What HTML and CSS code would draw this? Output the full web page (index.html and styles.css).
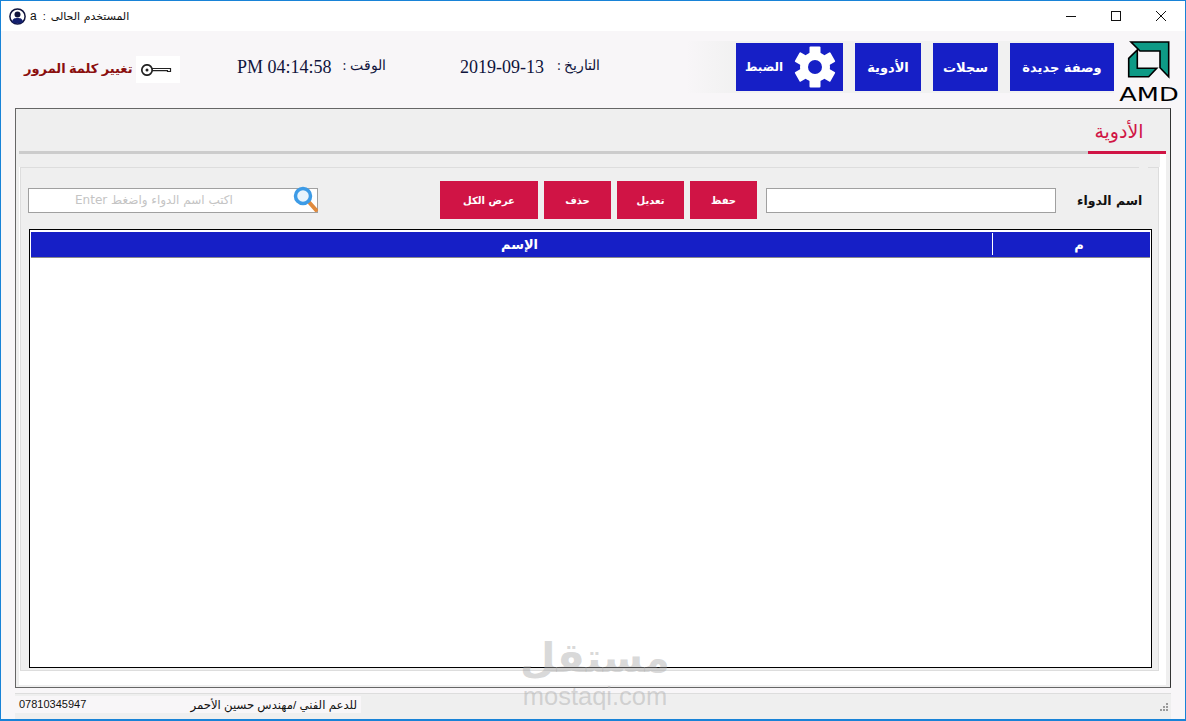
FILE: index.html
```html
<!DOCTYPE html>
<html lang="ar">
<head>
    <meta charset="UTF-8">
    <meta name="viewport" content="width=device-width, initial-scale=1.0">
    <title>AMD</title>
    <link rel="stylesheet" href="styles.css">
</head>
<body>
    <!-- Title bar -->
    <div class="titlebar">
        <svg class="user-icon" width="17" height="17" viewBox="0 0 17 17">
            <circle cx="8.5" cy="8.5" r="7.6" fill="#fff" stroke="#10143c" stroke-width="1.5"/>
            <circle cx="8.5" cy="6.4" r="3" fill="#10143c"/>
            <path d="M3 14 C3.5 10.5 5.5 10 8.5 10 C11.5 10 13.5 10.5 14 14 C12.500 16 4.500 16 3 14Z" fill="#14206e"/>
        </svg>
        <span class="title-user">a</span>
        <span class="title-sep">:</span>
        <span class="title-text">المستخدم الحالى</span>
        <div class="win-controls">
            <svg width="12" height="12" viewBox="0 0 12 12"><path d="M1 6.500H11" stroke="#111" fill="none"/></svg>
            <svg width="12" height="12" viewBox="0 0 12 12"><rect x="1.500" y="1.500" width="9" height="9" stroke="#111" fill="none"/></svg>
            <svg width="12" height="12" viewBox="0 0 12 12"><path d="M1 1L11 11M11 1L1 11" stroke="#111" fill="none"/></svg>
        </div>
    </div>

    <!-- Header -->
    <div class="header">
        <div class="password">
            <span class="password-text">تغيير كلمة المرور</span>
            <span class="key-box">
                <svg width="32" height="12" viewBox="0 0 32 12">
                    <circle cx="7" cy="6" r="5.200" fill="none" stroke="#222" stroke-width="1.700"/>
                    <circle cx="7" cy="6" r="1.500" fill="#222"/>
                    <path d="M12 4.500H30.500V7.500H27.500V6.700H12" fill="none" stroke="#222" stroke-width="1.200"/>
                </svg>
            </span>
        </div>
        <div class="clock clock-time"><span>PM 04:14:58</span><span class="clock-label" dir="rtl">الوقت :</span></div>
        <div class="clock clock-date"><span>2019-09-13</span><span class="clock-label" dir="rtl">التاريخ :</span></div>
        <div class="nav">
            <button class="nav-btn nav-settings">
                <span>الضبط</span>
                <svg width="42" height="42" viewBox="-21 -21 42 42">
                    <g fill="#fff">
                        <circle r="15"/>
                        <rect x="-5.500" y="-20.500" width="11" height="10" rx="1"/>
                        <rect x="-5.500" y="-20.500" width="11" height="10" rx="1" transform="rotate(60)"/>
                        <rect x="-5.500" y="-20.500" width="11" height="10" rx="1" transform="rotate(120)"/>
                        <rect x="-5.500" y="-20.500" width="11" height="10" rx="1" transform="rotate(180)"/>
                        <rect x="-5.500" y="-20.500" width="11" height="10" rx="1" transform="rotate(240)"/>
                        <rect x="-5.500" y="-20.500" width="11" height="10" rx="1" transform="rotate(300)"/>
                    </g>
                    <circle r="7" fill="#161fc6"/>
                </svg>
            </button>
            <button class="nav-btn nav-drugs">الأدوية</button>
            <button class="nav-btn nav-logs">سجلات</button>
            <button class="nav-btn nav-new">وصفة جديدة</button>
        </div>
        <div class="logo">
            <svg width="62" height="46" viewBox="0 0 62 46">
                <path d="M13 2H50.700V36.700L42 27.700V11H22Z" fill="#0e9a86" stroke="#000" stroke-width="1.600"/>
                <path d="M10.700 18.300L19.300 10V28.300H38.700L30.700 36.700H10.700Z" fill="#0e9a86" stroke="#000" stroke-width="1.600"/>
            </svg>
            <span class="logo-text">AMD</span>
        </div>
    </div>

    <!-- Main panel -->
    <div class="panel">
        <div class="tabs">
            <div class="tab">الأدوية</div>
        </div>
        <div class="tab-page">
            <div class="group">
                <div class="toolbar">
                    <div class="search">
                        <span class="search-hint" dir="rtl">اكتب اسم الدواء واضغط Enter</span>
                        <svg class="search-icon" width="26" height="26" viewBox="0 0 26 26">
                            <path d="M15 15L23 24" stroke="#e08a3c" stroke-width="4" stroke-linecap="round"/>
                            <circle cx="10" cy="10" r="7.500" fill="#e8f4fc" stroke="#3d9be6" stroke-width="3.500"/>
                        </svg>
                    </div>
                    <div class="actions">
                        <button class="action-btn">عرض الكل</button>
                        <button class="action-btn action-small">حذف</button>
                        <button class="action-btn action-small">تعديل</button>
                        <button class="action-btn action-small">حفظ</button>
                    </div>
                    <input class="name-input" type="text">
                    <label class="name-label">اسم الدواء</label>
                </div>
                <div class="grid">
                    <div class="grid-head">
                        <div class="col-name">الإسم</div>
                        <div class="col-num">م</div>
                    </div>
                </div>
            </div>
        </div>
    </div>

    <!-- Status bar -->
    <div class="statusbar">
        <div class="status-info">
            <span>07810345947</span>
            <span class="status-support">للدعم الفني /مهندس حسين الأحمر</span>
        </div>
        <svg class="grip" width="10" height="10" viewBox="0 0 10 10" fill="#9a9a9a">
            <rect x="7" y="1" width="2" height="2"/>
            <rect x="4" y="4" width="2" height="2"/><rect x="7" y="4" width="2" height="2"/>
            <rect x="1" y="7" width="2" height="2"/><rect x="4" y="7" width="2" height="2"/><rect x="7" y="7" width="2" height="2"/>
        </svg>
    </div>

    <!-- Watermark -->
    <div class="watermark">
        <div class="watermark-ar">مستقل</div>
        <div class="watermark-en">mostaqi.com</div>
    </div>
</body>
</html>
```

FILE: styles.css
```css
* {
    box-sizing: border-box;
}
html, body {
    margin: 0;
    padding: 0;
}
body {
    position: relative;
    width: 1186px;
    height: 721px;
    overflow: hidden;
    background: #f8f6f8;
    border: 1px solid #1883d7;
    border-bottom-width: 2px;
    font-family: "DejaVu Sans", sans-serif;
    color: #111;
}
button {
    border: none;
    padding: 0;
    font-family: inherit;
    color: white;
}

/* Title bar */
.titlebar {
    display: flex;
    align-items: center;
    height: 30px;
    padding-left: 8px;
    background: white;
    font-size: 11px;
}
.title-user {
    margin-left: 4px;
    font-family: "Liberation Sans", sans-serif;
    font-size: 12px;
}
.title-sep {
    margin-left: 6px;
    font-family: "Liberation Sans", sans-serif;
}
.title-text {
    margin-left: 5px;
}
.win-controls {
    display: flex;
    gap: 33px;
    margin-left: auto;
    padding-right: 18px;
}

/* Header */
.header {
    display: flex;
    height: 77px;
    padding-left: 23px;
}
.password {
    display: flex;
    align-items: center;
    height: 27px;
    margin-top: 25px;
    width: 156px;
    font-family: "Liberation Serif", "DejaVu Sans", serif;
}
.password-text {
    width: 112px;
    margin-top: -2px;
    font-size: 13px;
    font-weight: bold;
    color: #8b0f0f;
    white-space: nowrap;
}
.key-box {
    display: flex;
    align-items: center;
    width: 44px;
    height: 27px;
    padding-left: 4px;
    background: white;
}
.clock {
    display: flex;
    margin-top: 26px;
    font-family: "Liberation Serif", "DejaVu Serif", serif;
    font-size: 18px;
    color: #10143c;
    white-space: nowrap;
}
.clock-label {
    font-size: 14px;
    line-height: 18px;
}
.clock-time {
    gap: 11px;
    width: 223px;
    margin-left: 57px;
}
.clock-date {
    gap: 13px;
    width: 226px;
}
.nav {
    display: flex;
    gap: 12px;
    align-items: center;
    height: 52px;
    margin-top: 10px;
    padding-left: 50px;
    width: 428px;
    background: linear-gradient(to right, #f8f6f8, #f1f1f1 50px);
}
.nav-btn {
    height: 48px;
    background: #161fc6;
    font-size: 13px;
    font-weight: bold;
    white-space: nowrap;
}
.nav-settings {
    display: flex;
    align-items: center;
    justify-content: space-between;
    width: 107px;
    padding: 0 7px 0 9px;
    font-size: 12px;
}
.nav-drugs {
    width: 66px;
}
.nav-logs {
    width: 65px;
}
.nav-new {
    width: 104px;
}
.logo {
    display: flex;
    flex-direction: column;
    align-items: center;
    width: 62px;
    margin-left: 4px;
    padding-top: 9px;
}
.logo-text {
    font-size: 19px;
    line-height: 16px;
    color: #000;
    transform: scaleX(1.35);
}

/* Main panel */
.panel {
    display: flex;
    flex-direction: column;
    width: 1156px;
    height: 580px;
    margin-left: 14px;
    border: 1px solid #666;
    border-right-color: #333;
    background: #efefef;
}
.tabs {
    display: flex;
    justify-content: flex-end;
    height: 45px;
    margin: 0 4px 0 3px;
    border-bottom: 3px solid #ccc;
}
.tab {
    width: 78px;
    height: 45px;
    padding: 9px 16px 0 0;
    border-bottom: 3px solid #d01445;
    color: #d01445;
    font-size: 19px;
    line-height: 26px;
    text-align: center;
    white-space: nowrap;
}
.tab-page {
    height: 531px;
    margin: 0 4px 0 3px;
    padding: 13px 7px 14px 1px;
    background: linear-gradient(#efefef, #efefef) no-repeat left top / calc(100% - 6px) 13px, white;
}
.group {
    position: relative;
    height: 504px;
    padding: 13px 6px 3px 7px;
    border: 1px solid #ddd;
    background: #efefef;
}
/* break in the top border near the right edge */
.group::after {
    content: "";
    position: absolute;
    right: 10px;
    top: -1px;
    width: 9px;
    height: 1px;
    background: #efefef;
}
.toolbar {
    display: flex;
    align-items: center;
    height: 38px;
}
.search {
    display: flex;
    position: relative;
    align-items: center;
    width: 290px;
    height: 25px;
    padding-left: 46px;
    border: 1px solid #a0a0a0;
    background: white;
}
.search-hint {
    font-size: 12px;
    color: #c4c4c4;
    white-space: nowrap;
}
.search-icon {
    position: absolute;
    right: -2px;
    top: -3px;
}
.actions {
    display: flex;
    gap: 6px;
    margin-left: 122px;
}
.action-btn {
    width: 98px;
    height: 38px;
    background: #d01445;
    font-size: 10px;
    font-weight: bold;
}
.action-small {
    width: 67px;
}
.name-input {
    width: 290px;
    height: 25px;
    margin-left: 9px;
    border: 1px solid #a0a0a0;
    background: white;
}
.name-label {
    margin-left: 21px;
    font-size: 12.500px;
    font-weight: bold;
    white-space: nowrap;
}
.grid {
    height: 439px;
    width: 1123px;
    margin: 10px 0 0 1px;
    padding: 2px 1px;
    border: 1px solid #000;
    background: white;
}
.grid-head {
    display: flex;
    height: 26px;
    background: #161fc6;
    border-bottom: 1px solid #8a8a8a;
    color: white;
    font-size: 13px;
    font-weight: bold;
    line-height: 25px;
    text-align: center;
}
.col-name {
    width: 961px;
    padding-left: 16px;
}
.col-num {
    flex: 1;
    padding-left: 16px;
    background: linear-gradient(white, white) no-repeat left top 1px / 1px 22px;
}

/* Status bar */
.statusbar {
    display: flex;
    justify-content: space-between;
    width: 1156px;
    height: 26px;
    margin: 5px 0 0 14px;
    padding-top: 2px;
    border-top: 1px solid #ddd;
    background: #efefef;
}
.status-info {
    display: flex;
    justify-content: space-between;
    width: 346px;
    height: 17px;
    padding: 0 4px;
    background: #f8f6f8;
    font-size: 11px;
    line-height: 17px;
    font-family: "Liberation Sans", "DejaVu Sans", sans-serif;
}
.status-support {
    font-size: 11.700px;
}
.grip {
    margin: 6px 2px 0 0;
}

/* Watermark */
.watermark {
    position: absolute;
    left: 519px;
    top: 630px;
    width: 150px;
    text-align: center;
    color: rgba(170, 170, 170, 0.45);
    font-weight: bold;
}
.watermark-ar {
    font-size: 41px;
    line-height: 54px;
}
.watermark-en {
    font-family: "Liberation Sans", sans-serif;
    font-weight: normal;
    font-size: 25.500px;
    line-height: 22px;
}
```
